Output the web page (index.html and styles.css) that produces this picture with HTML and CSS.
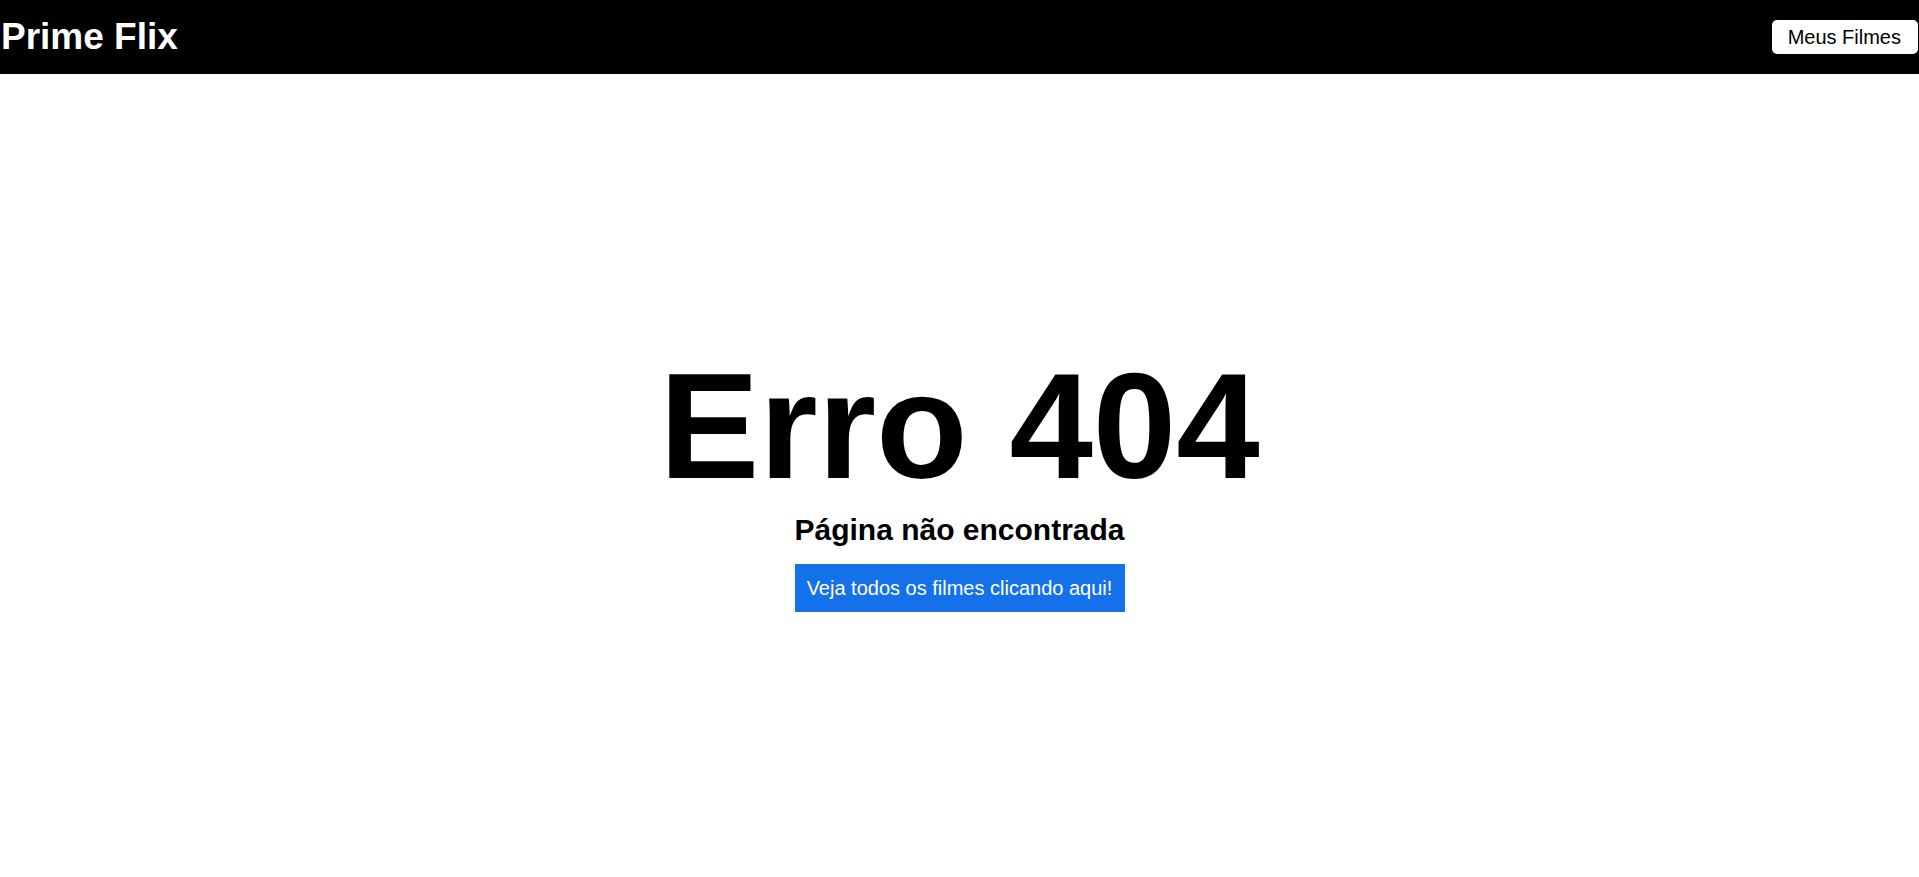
FILE: index.html
```html
<!DOCTYPE html>
<html lang="pt-BR">
<head>
<meta charset="utf-8">
<title>Prime Flix</title>
<link rel="stylesheet" href="styles.css">
</head>
<body>
<header class="header">
  <a class="logo" href="#">Prime Flix</a>
  <a class="favoritos" href="#">Meus Filmes</a>
</header>
<main class="not-found">
  <div class="not-found-box">
    <h1 class="title">Erro 404</h1>
    <h2 class="subtitle">Página não encontrada</h2>
    <a class="home-link" href="#">Veja todos os filmes clicando aqui!</a>
  </div>
</main>
</body>
</html>
```
FILE: styles.css
```css
* {
  margin: 0;
  padding: 0;
  box-sizing: border-box;
}

body {
  font-family: "Liberation Sans", Arial, sans-serif;
  background: #fff;
  color: #000;
}

.header {
  height: 74px;
  background: #000;
  display: flex;
  align-items: center;
  justify-content: space-between;
  padding: 0 1px 0 1px;
}

.logo {
  color: #fff;
  text-decoration: none;
  font-size: 37px;
  font-weight: bold;
}

.favoritos {
  background: #fff;
  color: #000;
  text-decoration: none;
  font-size: 20px;
  line-height: 24px;
  padding: 5px 17px 5px 16px;
  border-radius: 5px;
}

.not-found {
  height: calc(100vh - 74px);
  display: flex;
  align-items: center;
  justify-content: center;
}

.not-found-box {
  display: flex;
  flex-direction: column;
  align-items: center;
}

.title {
  font-size: 150px;
  font-weight: bold;
}

.subtitle {
  font-size: 30px;
  font-weight: bold;
}

.home-link {
  margin-top: 17px;
  width: 330px;
  text-align: center;
  background: #1471ea;
  color: #fff;
  text-decoration: none;
  font-size: 20px;
  line-height: 24px;
  padding: 12px 0;
}
```
